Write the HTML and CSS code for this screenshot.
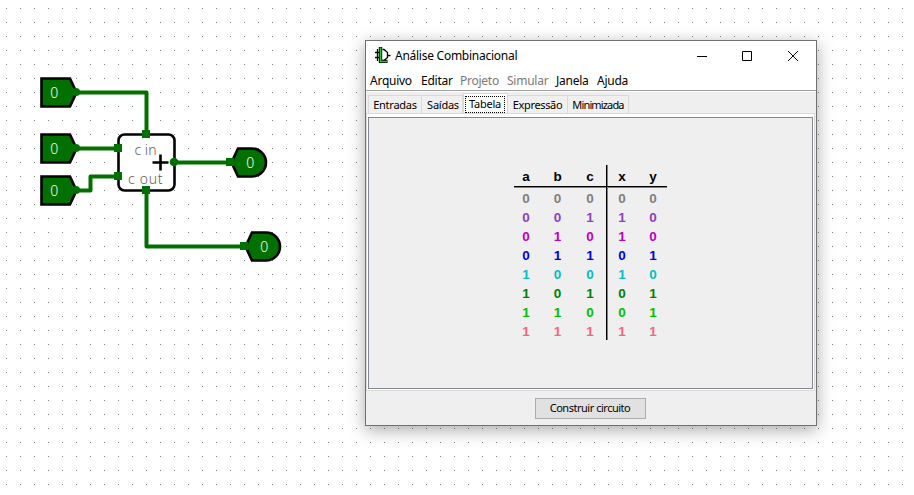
FILE: index.html
```html
<!DOCTYPE html>
<html lang="pt">
<head>
<meta charset="utf-8">
<title>Análise Combinacional</title>
<link rel="stylesheet" href="styles.css">
</head>
<body>
<svg class="circuit" width="914" height="495" viewBox="0 0 914 495">
  <defs>
    <pattern id="grid" x="6" y="8" width="14" height="14" patternUnits="userSpaceOnUse"><rect width="1" height="1" fill="#808080"/></pattern>
  </defs>
  <rect width="914" height="495" fill="url(#grid)"/>
  <rect x="118.5" y="134.500" width="56" height="56" rx="6" class="box"/>
  <g class="wires">
    <path d="M76 92.500H146.500V134"/>
    <path d="M76 148.500H118"/>
    <path d="M76 190.500H90.500V176.500H118"/>
    <path d="M174 162.500H230"/>
    <path d="M146.500 190V246.500H244"/>
  </g>
  <g class="pins">
    <path d="M41.500 78.500H70L76.500 92.500L70 106.500H41.500Z"/>
    <path d="M41.500 134.500H70L76.500 148.500L70 162.500H41.500Z"/>
    <path d="M41.500 176.500H70L76.500 190.500L70 204.500H41.500Z"/>
    <path d="M238 148.500H252A14 14 0 0 1 252 176.500H238L231.500 162.500Z"/>
    <path d="M252 232.500H266A14 14 0 0 1 266 260.500H252L245.500 246.500Z"/>
  </g>
  <g class="ports">
    <circle cx="76" cy="92" r="4"/><circle cx="76" cy="148" r="4"/><circle cx="76" cy="190" r="4"/><circle cx="174" cy="162" r="4.300"/>
    <path d="M142 130h8v8h-8zM114 144h8v8h-8zM114 172h8v8h-8zM142 186h8v8h-8zM226 158h8v8h-8zM240 242h8v8h-8z"/>
  </g>
  <path d="M152.500 162.500H168.500M160.500 154.500V170.500" class="plus"/>
  <g class="values">
    <text x="54.300" y="98">0</text><text x="54.300" y="154">0</text><text x="54.300" y="196">0</text><text x="250.300" y="168">0</text><text x="264.300" y="252">0</text>
  </g>
  <g class="labels"><text x="134.500" y="155" textLength="22">c in</text><text x="128" y="184" textLength="34.500">c out</text></g>
</svg>

<main class="window">
  <header class="titlebar">
    <svg class="logo" width="16" height="16" viewBox="0 0 16 16">
      <path d="M0 5.500H4M0 10.500H4M2.500 2V14M7.500 2.500H9L12.500 5.500V10.500L9 13.500M12.500 8.500H15.500" class="gate"/>
      <path d="M5.500 0V14.500H12.500" class="ell-edge"/><path d="M5.500 .5V14.500H12" class="ell"/>
    </svg>
    <h1>Análise Combinacional</h1>
    <svg class="controls" width="104" height="12" viewBox="0 0 104 12"><path d="M0 6.500H10M45.500 1.500H54.500V10.500H45.500Z"/><path d="M91 1L101 11M101 1L91 11"/></svg>
  </header>
  <nav class="menu">
    <span class="m1">Arquivo</span><span class="m2">Editar</span><span class="m3 off">Projeto</span><span class="m4 off">Simular</span><span class="m5">Janela</span><span class="m6">Ajuda</span>
  </nav>
  <div class="tabs">
    <span class="t1">Entradas</span><span class="t2">Saídas</span><span class="t3 selected"><b>Tabela</b></span><span class="t4">Expressão</span><span class="t5">Minimizada</span>
  </div>
  <section class="sheet">
    <div class="panel">
      <table>
        <colgroup><col class="c1"><col class="c2"><col class="c3"><col class="c4"><col class="c5"></colgroup>
        <thead><tr><th>a</th><th>b</th><th>c</th><th>x</th><th>y</th></tr></thead>
        <tbody>
          <tr class="r0"><td>0</td><td>0</td><td>0</td><td>0</td><td>0</td></tr>
          <tr class="r1"><td>0</td><td>0</td><td>1</td><td>1</td><td>0</td></tr>
          <tr class="r2"><td>0</td><td>1</td><td>0</td><td>1</td><td>0</td></tr>
          <tr class="r3"><td>0</td><td>1</td><td>1</td><td>0</td><td>1</td></tr>
          <tr class="r4"><td>1</td><td>0</td><td>0</td><td>1</td><td>0</td></tr>
          <tr class="r5"><td>1</td><td>0</td><td>1</td><td>0</td><td>1</td></tr>
          <tr class="r6"><td>1</td><td>1</td><td>0</td><td>0</td><td>1</td></tr>
          <tr class="r7"><td>1</td><td>1</td><td>1</td><td>1</td><td>1</td></tr>
        </tbody>
      </table>
    </div>
  </section>
  <footer><button>Construir circuito</button></footer>
</main>
</body>
</html>
```
FILE: styles.css
```css
* { box-sizing: border-box; }
body { margin: 0; width: 914px; height: 495px; overflow: hidden; position: relative; background: #fff; font: 12px/16px "Noto Sans", sans-serif; color: #000; }
.circuit { display: block; }
.box { fill: #fff; stroke: #000; stroke-width: 2.6; }
.wires { fill: none; stroke: #007000; stroke-width: 4; stroke-linejoin: round; }
.pins { fill: #007000; stroke: #000; stroke-width: 2.6; }
.ports { fill: #007000; }
.plus { stroke: #000; stroke-width: 2.6; }
.values { fill: #fff; font: 300 14px "Noto Sans", sans-serif; text-anchor: middle; }
.labels { fill: #606060; font: 300 14px "Noto Sans", sans-serif; }

.window { position: absolute; left: 365px; top: 40px; width: 452px; height: 386px; border: 1px solid #707070; background: #efefef; box-shadow: 0 4px 16px rgba(0,0,0,.34); display: flex; flex-direction: column; }
.titlebar { height: 30px; background: #fff; display: flex; align-items: center; padding: 0 15px 0 9px; }
.logo { margin: -2px 4px 0 0; }
.gate { fill: none; stroke: #000; stroke-width: 1.3; }
.ell-edge { fill: none; stroke: #000; stroke-width: 3.4; }
.ell { fill: none; stroke: #20d020; stroke-width: 1.6; }
h1 { margin: 0; font-size: 12px; font-weight: 400; letter-spacing: -.26px; flex: 1; }
.controls { fill: none; stroke: #000; stroke-width: 1; }
.menu { height: 20px; background: #fff; border-bottom: 1px solid #a0a0a0; display: flex; padding-left: 4px; line-height: 20px; letter-spacing: -.25px; }
.menu span { white-space: nowrap; }
.m1 { width: 51px; } .m2 { width: 39px; } .m3 { width: 47px; } .m4 { width: 49px; } .m5 { width: 41px; }
.off { color: #787878; }
.tabs { height: 22px; border-top: 1px solid #fff; display: flex; align-items: flex-end; padding-left: 2px; font-size: 11px; }
.tabs span { height: 18px; border: 1px solid #d9d9d9; border-left-width: 0; border-bottom: 0; background: #f0f0f0; line-height: 17px; text-align: center; white-space: nowrap; letter-spacing: -.25px; }
.tabs .t1 { width: 54px; border-left-width: 1px; } .t3 { width: 45px; }
.tabs .t2 { width: 41px; padding-left: 2px; }
.tabs .t4 { width: 60px; letter-spacing: -.35px; }
.tabs .t5 { width: 61px; letter-spacing: -.85px; }
.tabs .selected { height: 21px; background: #fff; margin-bottom: -1px; padding: 2px 2px 2px 1px; border-left-width: 1px; }
.selected b { display: block; height: 17px; border: 1px dotted #000; font-weight: 400; line-height: 13px; }
.sheet { height: 278px; margin: 0 1px 0 0; border: 1px solid #d9d9d9; background: #fff; padding: 3px 1px 1px; }
.panel { height: 272px; background: #efefef; border: 1px solid #828790; padding: 47px 0 0 145px; }
table { border-collapse: separate; border-spacing: 0; table-layout: fixed; width: 153px; font: bold 13.5px/18px "Liberation Sans", sans-serif; text-align: center; }
th, td { padding: 2px 0 0; height: 19px; line-height: 17px; }
th { height: 22px; border-bottom: 1px solid #000; box-shadow: 0 1px #808080; line-height: 18px; }
tbody tr:first-child td { height: 20px; padding-top: 3px; }
.c1 { width: 24px; } .c2 { width: 39px; } .c3 { width: 30px; } .c4 { width: 29px; } .c5 { width: 31px; }
th:nth-child(3), td:nth-child(3) { border-right: 1px solid #000; padding-right: 3px; }
td:nth-child(3) { box-shadow: 1px 0 #808080; }
th:nth-child(3) { box-shadow: 1px 0 #808080, 0 1px #808080; }
th:nth-child(5), td:nth-child(5) { padding-left: 3px; }
th:nth-child(4), td:nth-child(4) { padding-left: 1px; }
.r0 { color: #808080; } .r1 { color: #9040c0; } .r2 { color: #c000c0; } .r3 { color: #0000f0; }
.r4 { color: #00c0c0; } .r5 { color: #008000; } .r6 { color: #00c000; } .r7 { color: #ff6080; }
footer { flex: 1; display: flex; justify-content: center; padding: 7px 2px 0 0; }
button { width: 111px; height: 21px; border: 1px solid #adadad; background: #e1e1e1; padding: 0 0 2px; font: 11px "Noto Sans", sans-serif; letter-spacing: -.48px; color: #000; }
```
